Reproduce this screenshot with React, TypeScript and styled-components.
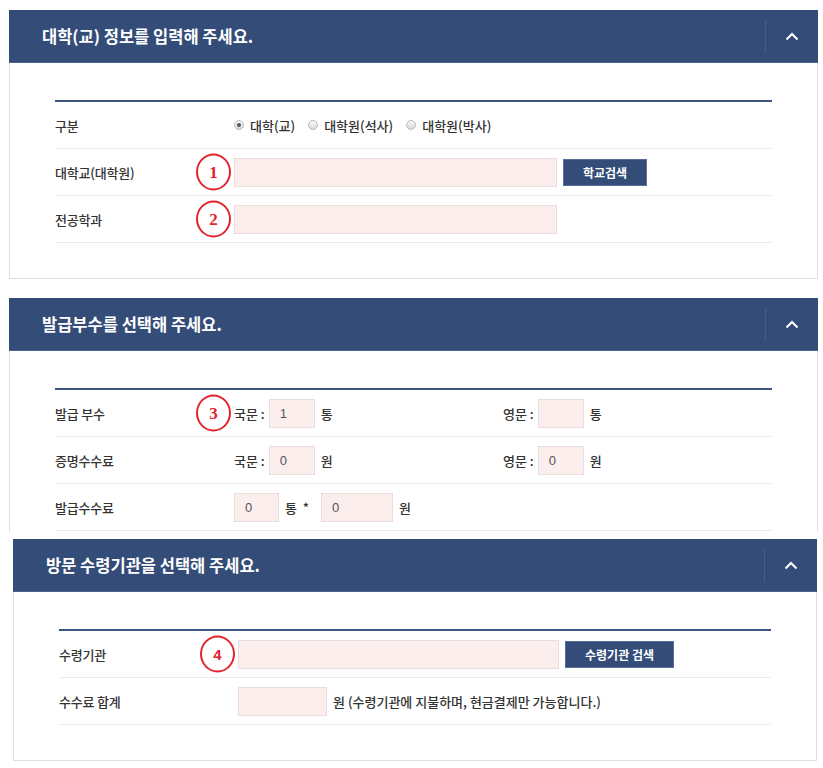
import React from 'react';
import styled, { createGlobalStyle } from 'styled-components';

const GlobalStyle = createGlobalStyle`
  body {
    margin: 0;
    background: #fff;
    font-family: "Noto Sans CJK KR", "Noto Sans", sans-serif;
    color: #333;
  }
`;

const Page = styled.div`
  display: flex;
  flex-direction: column;
  padding: 10px 0 0 9px;
`;

const Panel = styled.section<{ $cut?: boolean; $shift?: number }>`
  width: ${(p) => 809 - (p.$shift || 0) - (p.$shift ? 1 : 0)}px;
  margin-left: ${(p) => p.$shift || 0}px;
  margin-bottom: ${(p) => (p.$cut ? 7 : 19)}px;
  border: 1px solid #dedede;
  border-top: none;
  border-bottom: ${(p) => (p.$cut ? 'none' : '1px solid #dedede')};
  box-sizing: border-box;
`;

const PanelHeader = styled.header`
  display: flex;
  align-items: center;
  height: 53px;
  margin: 0 -1px;
  padding-left: 33px;
  background: #344c78;
  border-bottom: 1px solid #4b6290;
  box-sizing: border-box;
`;

const Title = styled.h2`
  flex: 1;
  margin: 0;
  color: #fff;
  font-size: 16.5px;
  font-weight: 700;
  letter-spacing: 0;
`;

const Toggle = styled.button`
  display: flex;
  align-items: center;
  justify-content: center;
  width: 53px;
  height: 33px;
  padding: 0;
  background: none;
  border: none;
  border-left: 1px solid #465d8a;
  cursor: pointer;
`;

const PanelBody = styled.div<{ $cut?: boolean }>`
  padding: 37px 45px ${(p) => (p.$cut ? 1 : 35)}px 45px;
`;

const FormTable = styled.div`
  border-top: 2px solid #3d5382;
`;

const Row = styled.div`
  display: grid;
  grid-template-columns: 179px 1fr;
  align-items: center;
  min-height: 46px;
  border-bottom: 1px solid #ececec;
`;

const Label = styled.div`
  font-size: 13px;
  font-weight: 500;
  color: #333;
  letter-spacing: -0.2px;
`;

const Field = styled.div`
  position: relative;
  display: flex;
  align-items: center;
  font-size: 13px;
  font-weight: 500;
  color: #333;
`;

const Halves = styled.div`
  flex: 1;
  display: grid;
  grid-template-columns: 1fr 1fr;
`;

const Group = styled.div`
  display: flex;
  align-items: center;
`;

const Marker = styled.span<{ $sans?: boolean }>`
  position: absolute;
  left: -38px;
  top: 50%;
  transform: translateY(-50%);
  display: flex;
  align-items: center;
  justify-content: center;
  width: 31px;
  height: 33px;
  border: 2px solid #e3232b;
  border-radius: 50%;
  background: #fff;
  color: #e3232b;
  font-family: ${(p) => (p.$sans ? '"Liberation Sans", Arial, sans-serif' : '"Liberation Serif", serif')};
  font-size: ${(p) => (p.$sans ? 15 : 17)}px;
  font-weight: 700;
`;

const TextInput = styled.input<{ $w: number; $gap?: number }>`
  width: ${(p) => p.$w}px;
  height: 29px;
  margin-left: ${(p) => p.$gap || 0}px;
  padding: 0 0 0 10px;
  box-sizing: border-box;
  background: #fdeeee;
  border: 1px solid #e8dcdc;
  font-family: "Liberation Sans", Arial, sans-serif;
  font-size: 13px;
  color: #555;
  outline: none;
`;

const SearchButton = styled.button<{ $w: number }>`
  width: ${(p) => p.$w}px;
  height: 27px;
  margin-left: 6px;
  padding: 0;
  background: #344c78;
  border: 1px solid #5a6f98;
  color: #fff;
  font-family: "Noto Sans CJK KR", sans-serif;
  font-size: 12px;
  font-weight: 700;
  cursor: pointer;
`;

const Unit = styled.span`
  margin-left: 6px;
  white-space: pre;
`;

const Caption = styled.span`
  margin-right: 4px;
  white-space: nowrap;
`;

const RadioGroup = styled.div`
  display: flex;
  align-items: center;
  gap: 13px;
`;

const RadioItem = styled.label`
  display: flex;
  align-items: center;
  gap: 6px;
`;

const RadioDot = styled.span<{ $on?: boolean }>`
  position: relative;
  width: 10px;
  height: 10px;
  border-radius: 50%;
  border: 1px solid #b9b9b9;
  box-sizing: border-box;
  background: linear-gradient(#fafafa, #d9d9d9);

  &::after {
    content: '';
    display: ${(p) => (p.$on ? 'block' : 'none')};
    position: absolute;
    left: 2px;
    top: 2px;
    width: 4px;
    height: 4px;
    border-radius: 50%;
    background: #555;
  }
`;

function Chevron() {
  return (
    <svg width="14" height="9" viewBox="0 0 14 9">
      <polyline points="1.5,7.5 7,2 12.5,7.5" fill="none" stroke="#fff" strokeWidth="2" />
    </svg>
  );
}

function PanelHead({ title }: { title: string }) {
  return (
    <PanelHeader>
      <Title>{title}</Title>
      <Toggle aria-label="접기">
        <Chevron />
      </Toggle>
    </PanelHeader>
  );
}

export default function App() {
  return (
    <Page>
      <GlobalStyle />

      <Panel>
        <PanelHead title="대학(교) 정보를 입력해 주세요." />
        <PanelBody>
          <FormTable>
            <Row>
              <Label>구분</Label>
              <Field>
                <RadioGroup>
                  <RadioItem><RadioDot $on />대학(교)</RadioItem>
                  <RadioItem><RadioDot />대학원(석사)</RadioItem>
                  <RadioItem><RadioDot />대학원(박사)</RadioItem>
                </RadioGroup>
              </Field>
            </Row>
            <Row>
              <Label>대학교(대학원)</Label>
              <Field>
                <Marker>1</Marker>
                <TextInput $w={323} />
                <SearchButton $w={84}>학교검색</SearchButton>
              </Field>
            </Row>
            <Row>
              <Label>전공학과</Label>
              <Field>
                <Marker>2</Marker>
                <TextInput $w={323} />
              </Field>
            </Row>
          </FormTable>
        </PanelBody>
      </Panel>

      <Panel $cut>
        <PanelHead title="발급부수를 선택해 주세요." />
        <PanelBody $cut>
          <FormTable>
            <Row>
              <Label>발급 부수</Label>
              <Field>
                <Marker>3</Marker>
                <Halves>
                  <Group>
                    <Caption>국문 :</Caption>
                    <TextInput $w={46} defaultValue="1" />
                    <Unit>통</Unit>
                  </Group>
                  <Group>
                    <Caption>영문 :</Caption>
                    <TextInput $w={46} />
                    <Unit>통</Unit>
                  </Group>
                </Halves>
              </Field>
            </Row>
            <Row>
              <Label>증명수수료</Label>
              <Field>
                <Halves>
                  <Group>
                    <Caption>국문 :</Caption>
                    <TextInput $w={46} defaultValue="0" />
                    <Unit>원</Unit>
                  </Group>
                  <Group>
                    <Caption>영문 :</Caption>
                    <TextInput $w={46} defaultValue="0" />
                    <Unit>원</Unit>
                  </Group>
                </Halves>
              </Field>
            </Row>
            <Row>
              <Label>발급수수료</Label>
              <Field>
                <TextInput $w={45} defaultValue="0" />
                <Unit>통  *</Unit>
                <TextInput $w={72} $gap={12} defaultValue="0" />
                <Unit>원</Unit>
              </Field>
            </Row>
          </FormTable>
        </PanelBody>
      </Panel>

      <Panel $shift={4}>
        <PanelHead title="방문 수령기관을 선택해 주세요." />
        <PanelBody>
          <FormTable>
            <Row>
              <Label>수령기관</Label>
              <Field>
                <Marker $sans>4</Marker>
                <TextInput $w={321} />
                <SearchButton $w={109}>수령기관 검색</SearchButton>
              </Field>
            </Row>
            <Row>
              <Label>수수료 합계</Label>
              <Field>
                <TextInput $w={89} />
                <Unit>원 (수령기관에 지불하며, 현금결제만 가능합니다.)</Unit>
              </Field>
            </Row>
          </FormTable>
        </PanelBody>
      </Panel>
    </Page>
  );
}
